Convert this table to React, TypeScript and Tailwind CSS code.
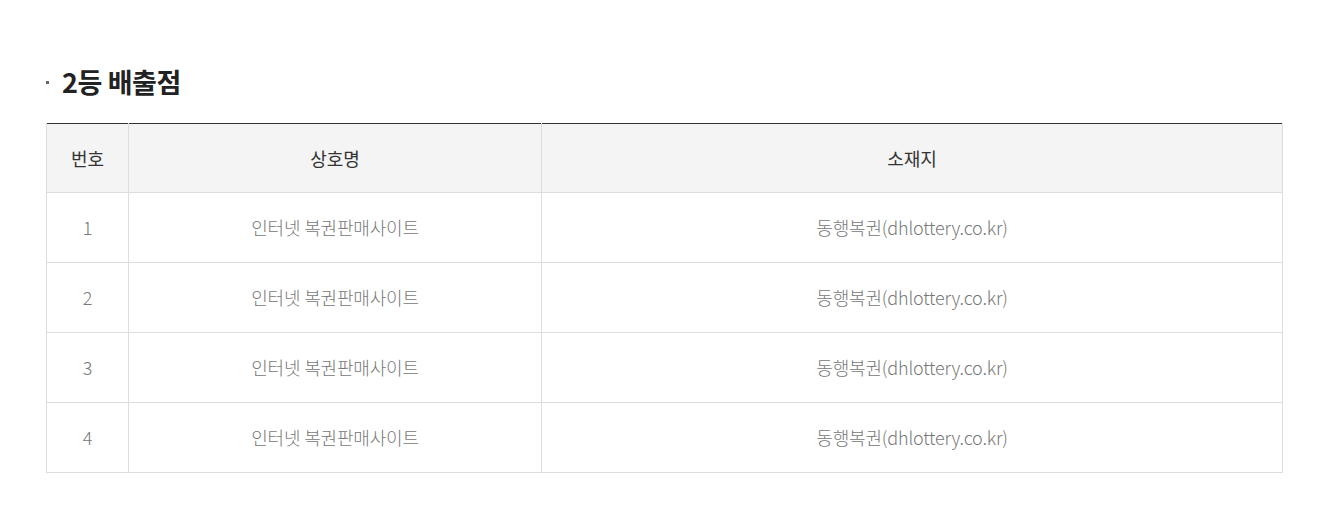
const rows = [1, 2, 3, 4].map((n) => ({
  no: n,
  name: "인터넷 복권판매사이트",
  address: "동행복권(dhlottery.co.kr)",
}));

const font = { fontFamily: '"Noto Sans CJK KR", "Noto Sans", sans-serif' };

export default function App() {
  return (
    <div className="min-h-[507px] w-full bg-white px-[46px] pt-[63px]" style={font}>
      <h3 className="flex items-center gap-[13px] text-[27px] font-bold leading-[38px] tracking-[-0.015em] text-[#222]">
        <span className="block size-[3px] bg-[#666]" />
        2등 배출점
      </h3>

      <table className="mt-[22px] w-[1237px] table-fixed border-collapse border-t border-t-[#333] text-center">
        <colgroup>
          <col className="w-[82px]" />
          <col className="w-[413px]" />
          <col />
        </colgroup>
        <thead>
          <tr className="h-[69px] bg-[#f4f4f4] text-[18px] text-[#333]">
            <th className="border border-t-0 border-[#ddd] font-normal">번호</th>
            <th className="border border-t-0 border-[#ddd] font-normal">상호명</th>
            <th className="border border-t-0 border-[#ddd] font-normal">소재지</th>
          </tr>
        </thead>
        <tbody>
          {rows.map((r) => (
            <tr key={r.no} className="h-[70px] text-[18px] font-light tracking-[-0.01em] text-[#777]">
              <td className="border border-[#ddd]">{r.no}</td>
              <td className="border border-[#ddd]">{r.name}</td>
              <td className="border border-[#ddd]">{r.address}</td>
            </tr>
          ))}
        </tbody>
      </table>
    </div>
  );
}
